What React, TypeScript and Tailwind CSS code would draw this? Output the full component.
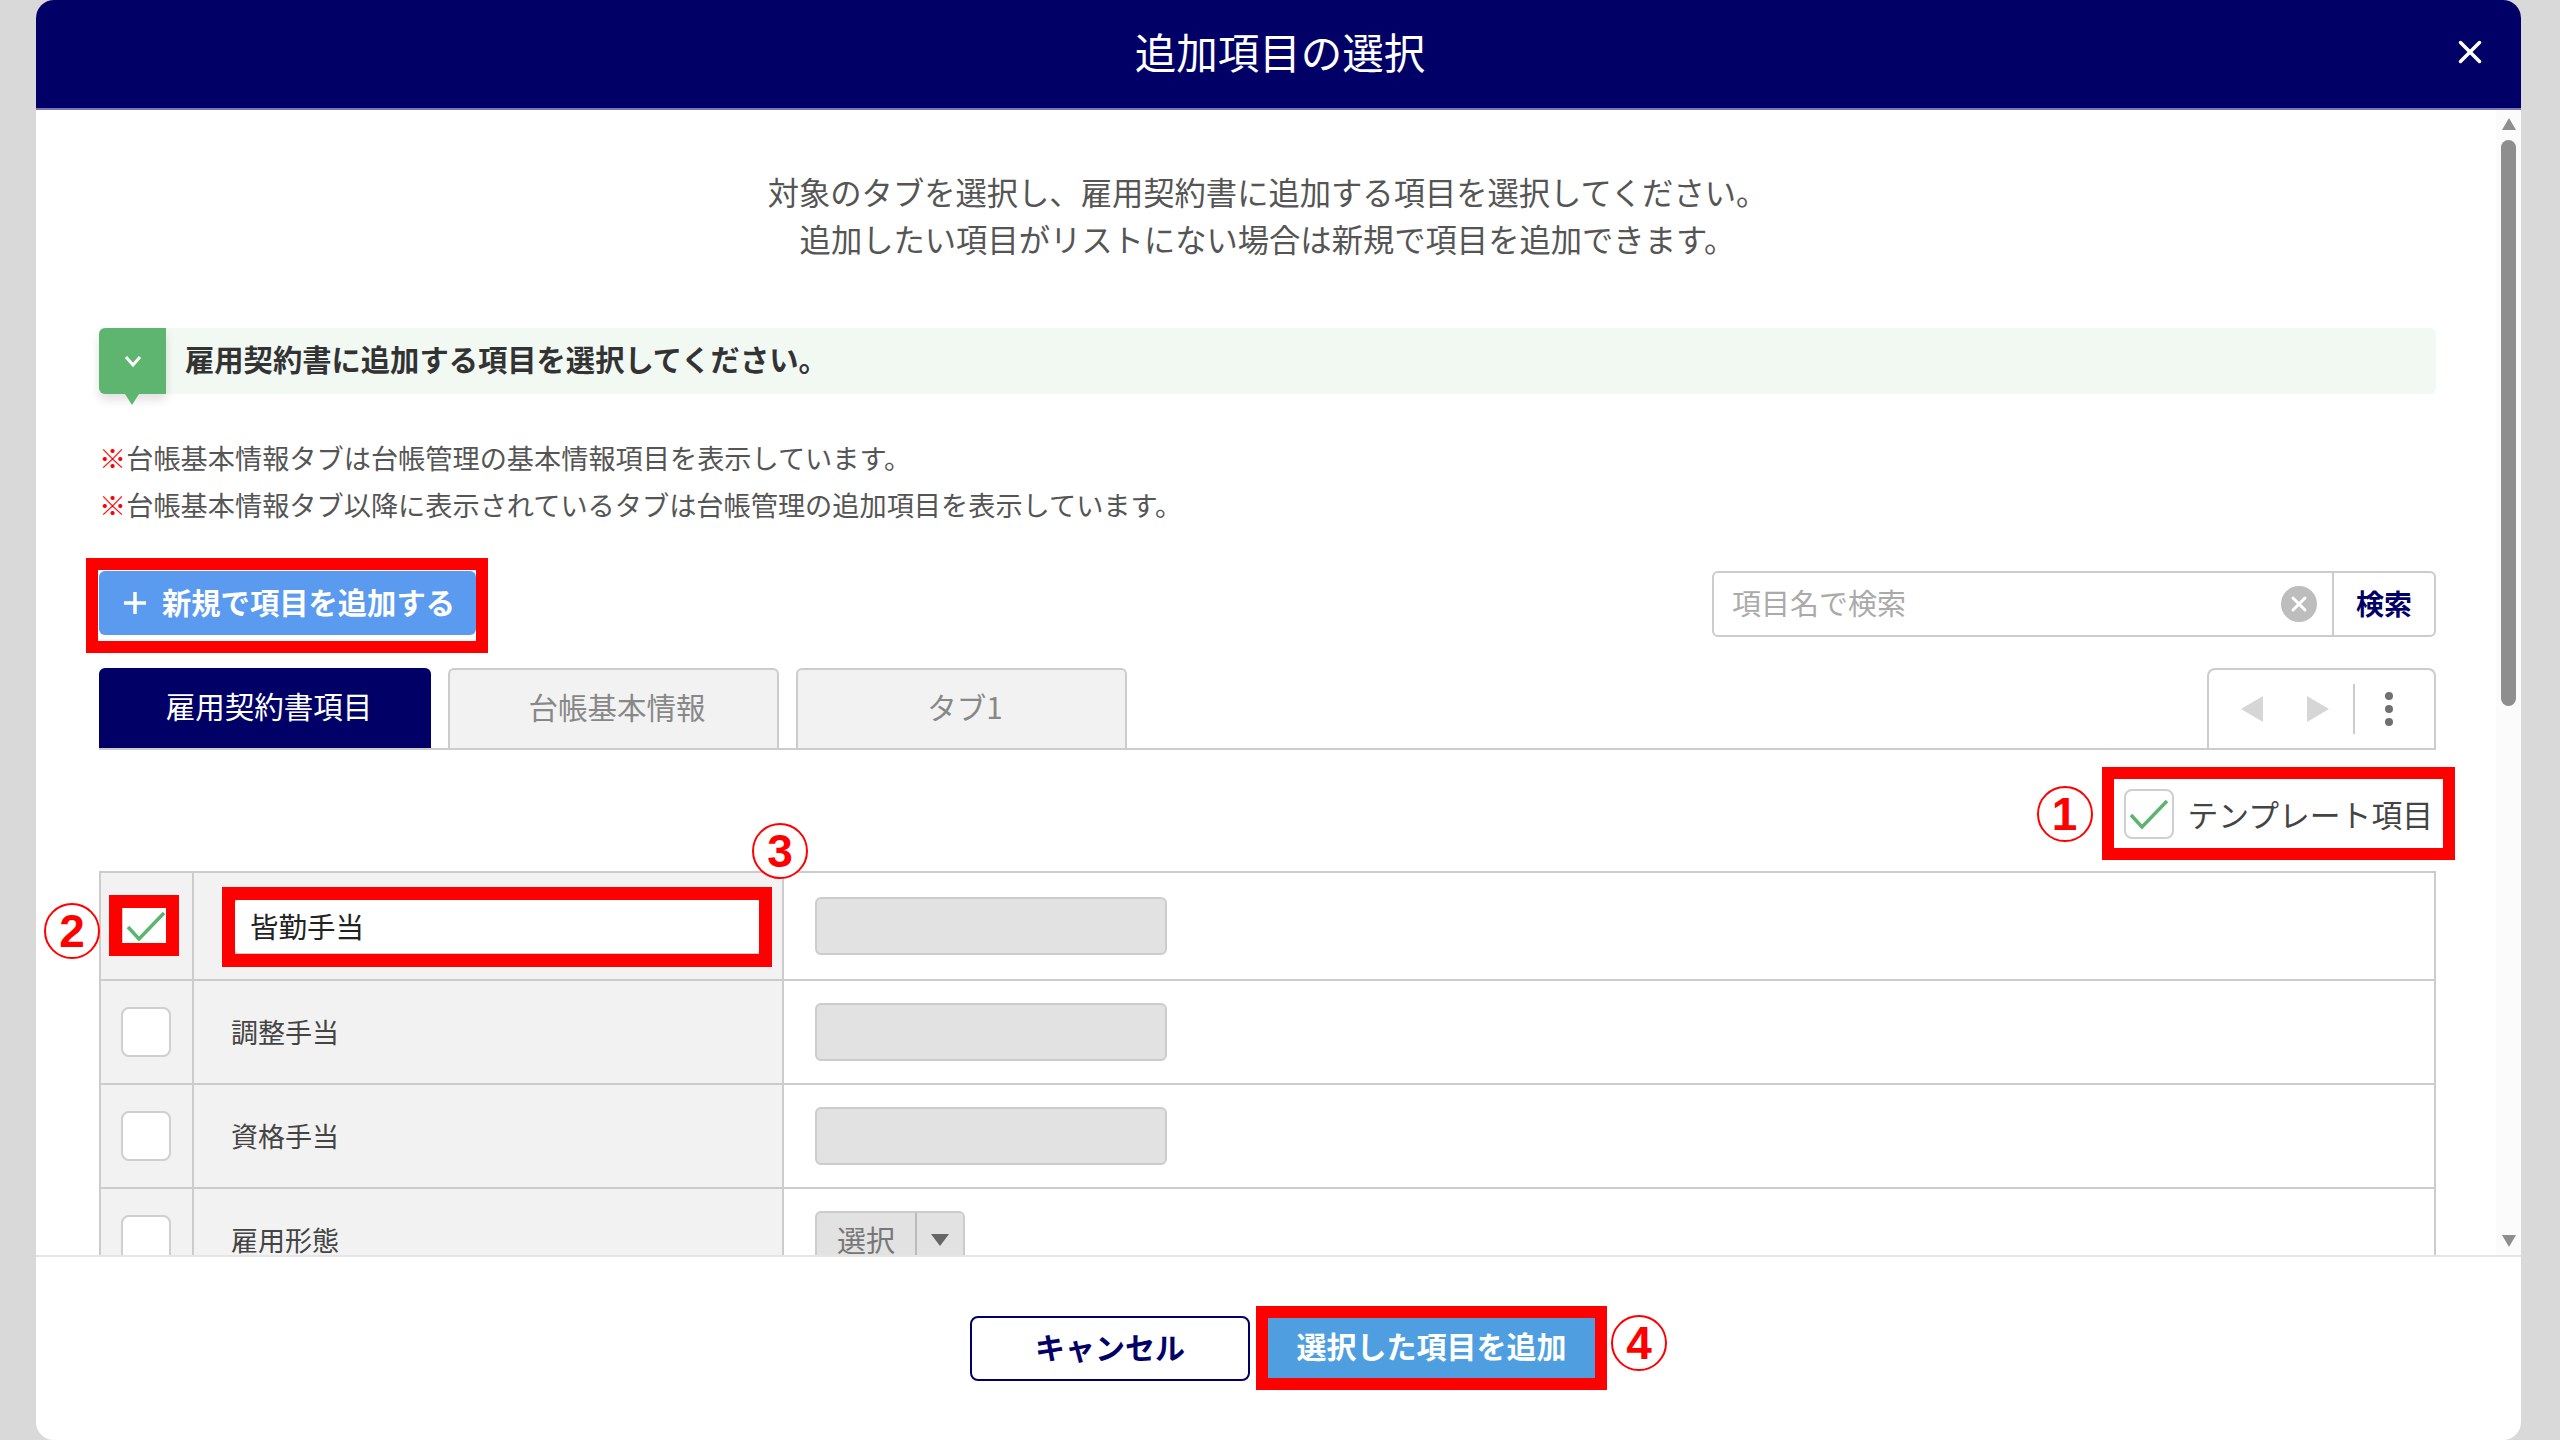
import React from 'react';
import { X } from 'lucide-react';

const Mark: React.FC<{ n: string; className: string }> = ({ n, className }) => (
    <span className={`absolute w-[56px] h-[56px] rounded-full border-2 border-[#ff0000] bg-white flex items-center justify-center text-[#ff0000] text-[46px] leading-none font-bold font-['Liberation_Sans',sans-serif] ${className}`}>
        {n}
    </span>
);

const CheckBox: React.FC<{ checked?: boolean }> = ({ checked }) => (
    <span className="block w-[50px] h-[50px] bg-white border-2 border-[#cfcfcf] rounded-[8px] box-border">
        {checked && (
            <svg viewBox="0 0 50 50" className="w-[50px] h-[50px] -m-[2px]" fill="none">
                <polyline points="7,26 18,38 43,12" stroke="#5cb56f" strokeWidth="3.5" />
            </svg>
        )}
    </span>
);

const Disabled: React.FC = () => (
    <div className="w-[352px] h-[58px] bg-[#e2e2e2] border-2 border-[#cccccc] rounded-[6px]" />
);

const Row: React.FC<{ label: string; h: string; children: React.ReactNode }> = ({ label, h, children }) => (
    <div className={`grid grid-cols-[93px_590px_1fr] border-b-2 border-[#cccccc] ${h}`}>
        <div className="bg-[#f2f2f2] border-r-2 border-[#cccccc] flex items-center pl-[20px]">
            <CheckBox />
        </div>
        <div className="bg-[#f2f2f2] border-r-2 border-[#cccccc] flex items-center pl-[37px] text-[27px] text-[#444444]">{label}</div>
        <div className="flex items-center pl-[31px]">{children}</div>
    </div>
);

export default function App() {
    return (
        <div className="h-[1440px] bg-[#d9d9d9] pl-[36px] pr-[39px] overflow-hidden font-['Noto_Sans_CJK_JP','Noto_Sans',sans-serif]">
            <div className="h-full bg-white rounded-[18px] flex flex-col overflow-hidden">
                <header className="h-[110px] shrink-0 bg-[#000066] border-b-2 border-[#7878b8] flex items-center justify-center relative text-white text-[41.5px] pb-[5px] pl-[3px]">
                    追加項目の選択
                    <X className="absolute right-[32px] top-[33px] w-[38px] h-[38px]" strokeWidth={2.2} />
                </header>

                <div className="flex-1 min-h-0 flex">
                    <div className="flex-1 min-w-0 overflow-hidden pl-[63px] pr-[60px] pt-[58px]">
                        <p className="text-center text-[31.3px] leading-[47px] text-[#555555]">
                            対象のタブを選択し、雇用契約書に追加する項目を選択してください。
                            <br />
                            追加したい項目がリストにない場合は新規で項目を追加できます。
                        </p>

                        <div className="mt-[66px] h-[66px] bg-[#f2f9f3] rounded-[6px] flex items-center relative">
                            <div className="w-[67px] h-[66px] bg-[#5eb56f] rounded-l-[6px] flex items-center justify-center shadow-[0_6px_10px_rgba(0,0,0,0.12)]">
                                <svg viewBox="0 0 20 14" className="w-[20px] h-[14px]" fill="none">
                                    <polyline points="3,3 10,11 17,3" stroke="#ffffff" strokeWidth="3" />
                                </svg>
                            </div>
                            <div className="absolute left-[26px] top-[66px] w-0 h-0 border-x-[7px] border-x-transparent border-t-[11px] border-t-[#5eb56f]" />
                            <span className="ml-[19px] mb-[4px] text-[29.3px] font-bold text-[#333333]">雇用契約書に追加する項目を選択してください。</span>
                        </div>

                        <div className="mt-[40px] text-[27.2px] leading-[47px] text-[#555555]">
                            <p><span className="text-[#ff0000] font-bold">※</span>台帳基本情報タブは台帳管理の基本情報項目を表示しています。</p>
                            <p><span className="text-[#ff0000] font-bold">※</span>台帳基本情報タブ以降に表示されているタブは台帳管理の追加項目を表示しています。</p>
                        </div>

                        <div className="mt-[43px] flex justify-between">
                            <div className="relative">
                                <button className="w-[377px] h-[64px] bg-[#5a9bf0] rounded-[6px] text-white text-[29.3px] font-bold flex items-center pl-[24px] gap-[15px] pb-[3px]">
                                    <svg viewBox="0 0 24 24" className="w-[24px] h-[24px] mt-[3px]" fill="none">
                                        <path d="M12 1v22M1 12h22" stroke="#ffffff" strokeWidth="3.5" />
                                    </svg>
                                    新規で項目を追加する
                                </button>
                                <div className="absolute -left-[13px] -right-[12px] -top-[13px] -bottom-[16px] border-[12px] border-[#ff0000] pointer-events-none" />
                            </div>
                            <div className="w-[724px] h-[66px] border-2 border-[#cccccc] rounded-[6px] flex items-center">
                                <span className="flex-1 pl-[18px] pb-[3px] text-[29px] text-[#aaaaaa]">項目名で検索</span>
                                <span className="w-[36px] h-[36px] rounded-full bg-[#bdbdbd] flex items-center justify-center mr-[15px]">
                                    <X className="w-[24px] h-[24px] text-white" strokeWidth={3} />
                                </span>
                                <span className="w-[102px] h-full border-l-2 border-[#cccccc] flex items-center justify-center pb-[3px] text-[28px] font-bold text-[#000066]">検索</span>
                            </div>
                        </div>

                        <div className="mt-[31px] h-[82px] border-b-2 border-[#cccccc] flex gap-[17px]">
                            <div className="w-[332px] bg-[#000066] rounded-t-[6px] text-white text-[29.5px] flex items-center justify-center pl-[8px] pb-[5px]">雇用契約書項目</div>
                            <div className="w-[331px] bg-[#f2f2f2] border-2 border-b-0 border-[#cccccc] rounded-t-[6px] text-[#888888] text-[29.5px] flex items-center justify-center pl-[7px] pb-[5px]">台帳基本情報</div>
                            <div className="w-[331px] bg-[#f2f2f2] border-2 border-b-0 border-[#cccccc] rounded-t-[6px] text-[#888888] text-[29.5px] flex items-center justify-center pl-[7px] pb-[5px]">タブ1</div>
                            <div className="ml-auto w-[229px] border-2 border-b-0 border-[#cccccc] rounded-t-[8px] flex items-center pl-[32px]">
                                <svg viewBox="0 0 90 26" className="w-[90px] h-[26px]">
                                    <polygon points="22,0 22,26 0,13" fill="#d6d6d6" />
                                    <polygon points="66,0 88,13 66,26" fill="#d6d6d6" />
                                </svg>
                                <div className="ml-[22px] h-[50px] border-l-2 border-[#cccccc]" />
                                <div className="ml-[30px] flex flex-col gap-[5px]">
                                    <span className="block w-[8px] h-[8px] rounded-full bg-[#707070]" />
                                    <span className="block w-[8px] h-[8px] rounded-full bg-[#707070]" />
                                    <span className="block w-[8px] h-[8px] rounded-full bg-[#707070]" />
                                </div>
                            </div>
                        </div>

                        <div className="h-[121px] flex justify-end items-start pt-[39px] pr-[3px]">
                            <div className="relative flex items-center gap-[14px] text-[30.8px] leading-[50px] text-[#444444]">
                                <CheckBox checked />
                                テンプレート項目
                                <div className="absolute -left-[22px] -right-[22px] -top-[22px] -bottom-[21px] border-[12px] border-[#ff0000] pointer-events-none" />
                                <Mark n="1" className="-left-[87px] -top-[3px]" />
                            </div>
                        </div>

                        <div className="border-2 border-b-0 border-[#cccccc]">
                            <div className="grid grid-cols-[93px_590px_1fr] border-b-2 border-[#cccccc] h-[108px]">
                                <div className="bg-[#f2f2f2] border-r-2 border-[#cccccc] flex items-center pl-[20px]">
                                    <div className="relative">
                                        <CheckBox checked />
                                        <div className="absolute -left-[12px] -right-[8px] -top-[6px] -bottom-[5px] border-[13px] border-[#ff0000] pointer-events-none" />
                                        <Mark n="2" className="-left-[77px] top-[2px]" />
                                    </div>
                                </div>
                                <div className="bg-[#f2f2f2] border-r-2 border-[#cccccc] flex items-center pl-[39px]">
                                    <div className="relative w-[529px] h-[57px] bg-white border-2 border-[#cccccc] rounded-[6px] flex items-center pl-[15px] text-[28.5px] text-[#222222]">
                                        皆勤手当
                                        <div className="absolute -left-[13px] -right-[12px] -top-[13px] -bottom-[14px] border-[13px] border-[#ff0000] pointer-events-none" />
                                        <Mark n="3" className="left-[517px] -top-[77px]" />
                                    </div>
                                </div>
                                <div className="flex items-center pl-[31px]"><Disabled /></div>
                            </div>
                            <Row label="調整手当" h="h-[104px]"><Disabled /></Row>
                            <Row label="資格手当" h="h-[104px]"><Disabled /></Row>
                            <Row label="雇用形態" h="h-[104px]">
                                <div className="w-[150px] h-[58px] bg-[#e2e2e2] border-2 border-[#cccccc] rounded-[6px] flex items-center text-[29px] text-[#777777]">
                                    <span className="w-[100px] h-full border-r-2 border-[#bbbbbb] flex items-center justify-center">選択</span>
                                    <svg viewBox="0 0 18 12" className="ml-[14px] w-[18px] h-[12px]"><polygon points="0,0 18,0 9,12" fill="#666666" /></svg>
                                </div>
                            </Row>
                        </div>
                    </div>

                    <div className="w-[25px] shrink-0 bg-[#fbfbfb] flex flex-col items-center pt-[8px] pb-[8px]">
                        <svg viewBox="0 0 14 12" className="w-[14px] h-[12px]"><polygon points="7,0 14,12 0,12" fill="#8e8e8e" /></svg>
                        <div className="mt-[10px] w-[15px] h-[566px] rounded-full bg-[#8e8e8e]" />
                        <svg viewBox="0 0 14 12" className="mt-auto w-[14px] h-[12px]"><polygon points="0,0 14,0 7,12" fill="#8e8e8e" /></svg>
                    </div>
                </div>

                <footer className="h-[185px] shrink-0 border-t-2 border-[#e5e5e5] flex justify-center items-start pt-[59px] pl-[8px] gap-[18px]">
                    <button className="w-[280px] h-[65px] bg-white border-2 border-[#000066] rounded-[8px] text-[#000066] text-[30px] font-bold pb-[4px]">キャンセル</button>
                    <div className="relative">
                        <button className="w-[327px] h-[62px] bg-[#4f9fe0] text-white text-[30px] font-bold pb-[4px]">選択した項目を追加</button>
                        <div className="absolute -left-[12px] -right-[12px] -top-[10px] -bottom-[12px] border-[12px] border-[#ff0000] pointer-events-none" />
                        <Mark n="4" className="left-[343px] -top-[1px]" />
                    </div>
                </footer>
            </div>
        </div>
    );
}
